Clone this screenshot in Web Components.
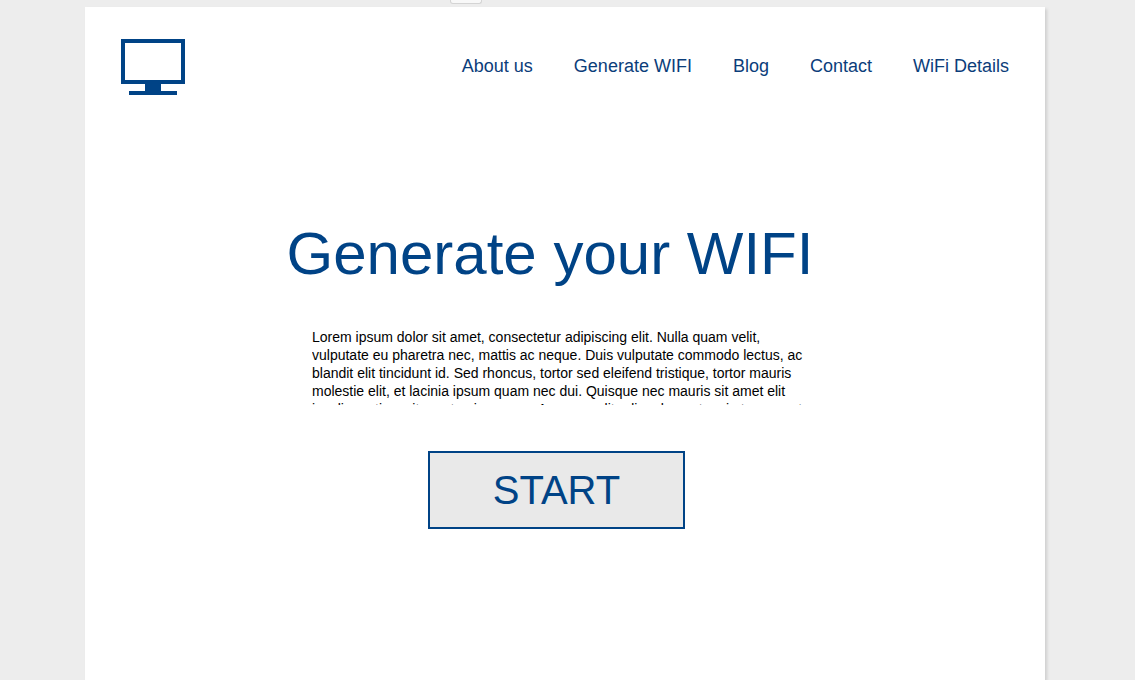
<!DOCTYPE html>
<html lang="en">
<head>
<meta charset="utf-8">
<meta name="viewport" content="width=device-width, initial-scale=1">
<title>Generate your WIFI</title>
<style>
  html { background: #ededed; }
  body {
    margin: 0;
    font-family: "Liberation Sans", Arial, sans-serif;
    color: #000;
  }
</style>
</head>
<body>
<wifi-page>
  <site-header slot="header">
    <site-logo slot="logo"></site-logo>
    <nav-link href="#about">About us</nav-link>
    <nav-link href="#generate">Generate WIFI</nav-link>
    <nav-link href="#blog">Blog</nav-link>
    <nav-link href="#contact">Contact</nav-link>
    <nav-link href="#details">WiFi Details</nav-link>
  </site-header>
  <hero-panel>
    <span slot="title">Generate your WIFI</span>
    <span slot="text">Lorem ipsum dolor sit amet, consectetur adipiscing elit. Nulla quam velit, vulputate eu pharetra nec, mattis ac neque. Duis vulputate commodo lectus, ac blandit elit tincidunt id. Sed rhoncus, tortor sed eleifend tristique, tortor mauris molestie elit, et lacinia ipsum quam nec dui. Quisque nec mauris sit amet elit iaculis pretium sit amet quis magna. Aenean velit odio, elementum in tempus ut,</span>
    <start-button slot="action">START</start-button>
  </hero-panel>
</wifi-page>

<script>
  function define(name, html, setup) {
    customElements.define(name, class extends HTMLElement {
      constructor() {
        super();
        this.attachShadow({ mode: "open" }).innerHTML = html;
      }
      connectedCallback() {
        if (setup) setup(this);
      }
    });
  }

  define("wifi-page", `
    <style>
      :host { display: flex; flex-direction: column; min-height: 100vh; padding-right: 5px; box-sizing: border-box; }
      .handle {
        align-self: center; box-sizing: border-box; width: 32px; height: 4px; margin: 0 198px 3px 0;
        background: #f8f8f8; border: 1px solid #d4d4d4; border-top: 0; border-radius: 0 0 3px 3px;
      }
      .sheet {
        flex: 1; box-sizing: border-box; width: 100%; max-width: 960px; margin: 0 auto;
        background: #fff; box-shadow: 2px 2px 3px rgba(0, 0, 0, .13);
      }
    </style>
    <div class="handle"></div>
    <div class="sheet"><slot name="header"></slot><main><slot></slot></main></div>`);

  define("site-header", `
    <style>
      :host { display: block; }
      header { display: flex; justify-content: space-between; align-items: flex-start; padding: 32px 36px 0; }
      nav { display: flex; flex-wrap: wrap; gap: 8px 41px; padding-top: 16px; }
    </style>
    <header><slot name="logo"></slot><nav aria-label="Main"><slot></slot></nav></header>`);

  define("site-logo", `
    <style>
      :host { display: block; }
      svg { display: block; }
    </style>
    <svg width="64" height="56" viewBox="0 0 64 56" fill="#004386" role="img" aria-label="Monitor">
      <path fill-rule="evenodd" d="M0 0H64V45H40V52H56V56H8V52H24V45H0ZM4 4V41H60V4Z"/>
    </svg>`);

  define("nav-link", `
    <style>
      :host { display: block; }
      a { display: block; color: #0b3d7a; font-size: 18px; line-height: 22px; text-decoration: none; white-space: nowrap; }
    </style>
    <a><slot></slot></a>`,
    el => { el.shadowRoot.querySelector("a").href = el.getAttribute("href"); });

  define("hero-panel", `
    <style>
      :host { display: flex; flex-direction: column; align-items: center; padding-top: 125px; }
      h1 { margin: 0 30px 0 0; color: #004386; font-size: 60px; line-height: 68px; font-weight: 400; }
      p { width: 100%; max-width: 496px; height: 77px; margin: 40px 10px 46px 0; overflow: hidden; font-size: 14px; line-height: 18px; }
      .action { margin-right: 17px; }
    </style>
    <h1><slot name="title"></slot></h1>
    <p><slot name="text"></slot></p>
    <div class="action"><slot name="action"></slot></div>`);

  define("start-button", `
    <style>
      :host { display: block; }
      button {
        display: block; box-sizing: border-box; padding: 14px 63px; margin: 0;
        border: 2px solid #004386; border-radius: 0; background: #e9e9e9; color: #004386;
        font: 400 40px/46px "Liberation Sans", Arial, sans-serif; cursor: pointer;
      }
    </style>
    <button type="button"><slot></slot></button>`);
</script>
</body>
</html>
